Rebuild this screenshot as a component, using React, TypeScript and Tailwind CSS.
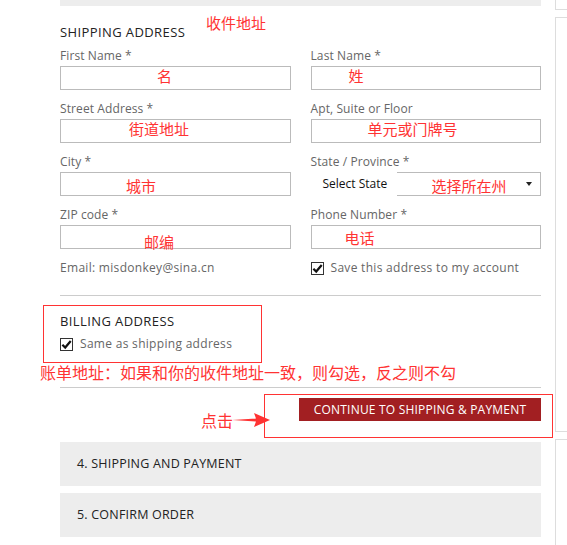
import React from "react";

const cjk = { fontFamily: '"Noto Sans CJK SC", sans-serif' };

function Check() {
  return (
    <span className="inline-flex h-[13px] w-[13px] shrink-0 items-center justify-center border border-[#333] bg-white">
      <svg width="11" height="11" viewBox="0 0 12 12">
        <path d="M1.5 6.2 L4.6 9.3 L10.6 2.2" fill="none" stroke="#111" strokeWidth="2.4" />
      </svg>
    </span>
  );
}

function Field({ label, note, noteLeft, noteTop = 0 }: { label: string; note?: string; noteLeft?: number; noteTop?: number }) {
  return (
    <div>
      <div className="mb-[2px] text-[12px] leading-[16px] tracking-[0.1px] text-[#666]">{label}</div>
      <div className="relative h-[24px] border border-[#bbb] bg-white">
        {note && (
          <span
            className="absolute whitespace-nowrap text-[15px] leading-[18px] text-[#f33]"
            style={{ ...cjk, left: noteLeft, top: noteTop }}
          >
            {note}
          </span>
        )}
      </div>
    </div>
  );
}

export default function App() {
  return (
    <div
      className="flex h-[545px] w-[567px] overflow-hidden bg-white"
      style={{ fontFamily: '"Open Sans", "Noto Sans CJK SC", sans-serif' }}
    >
      <div className="w-[60px] shrink-0" />

      <div className="w-[481px] shrink-0">
        <div className="h-[6px] bg-[#ededed]" />

        {/* shipping address */}
        <div className="relative mt-[18px] text-[13px] leading-[16px] tracking-[0.4px] text-[#222]">
          SHIPPING ADDRESS
          <span className="absolute left-[146px] top-[-10px] text-[15px] leading-[18px] tracking-normal text-[#f33]" style={cjk}>
            收件地址
          </span>
        </div>

        <div className="mt-[8px] grid grid-cols-2 gap-x-[20px] gap-y-[11px]">
          <Field label="First Name *" note="名" noteLeft={96} />
          <Field label="Last Name *" note="姓" noteLeft={37} />
          <Field label="Street Address *" note="街道地址" noteLeft={68} />
          <Field label="Apt, Suite or Floor" note="单元或门牌号" noteLeft={56} />
          <Field label="City *" note="城市" noteLeft={65} noteTop={4} />
          <div>
            <div className="mb-[2px] text-[12px] leading-[16px] tracking-[0.1px] text-[#666]">State / Province *</div>
            <div className="flex h-[24px] items-stretch">
              <div className="flex w-[86px] items-center pl-[12px] text-[12px] text-[#111]">Select State</div>
              <div className="relative flex flex-1 items-center justify-end border-y border-r border-[#bbb] pr-[8px]">
                <span className="absolute left-[35px] top-[4px] text-[15px] leading-[18px] text-[#f33]" style={cjk}>
                  选择所在州
                </span>
                <svg width="6" height="4" viewBox="0 0 6 4">
                  <path d="M0 0 H6 L3 4 Z" fill="#222" />
                </svg>
              </div>
            </div>
          </div>
          <Field label="ZIP code *" note="邮编" noteLeft={83} noteTop={7} />
          <Field label="Phone Number *" note="电话" noteLeft={33} noteTop={3} />
          <div className="text-[12px] leading-[16px] tracking-[0.3px] text-[#666]">Email: misdonkey@sina.cn</div>
          <label className="flex items-center gap-[7px] text-[12px] leading-[16px] tracking-[0.3px] text-[#666]">
            <Check />
            Save this address to my account
          </label>
        </div>

        <div className="mt-[19px] h-px bg-[#ccc]" />

        {/* billing address */}
        <div className="relative mt-[17px]">
          <div className="pointer-events-none absolute left-[-17px] top-[-8px] h-[58px] w-[219px] border border-[#f33]" />
          <div className="text-[13px] leading-[16px] tracking-[0.4px] text-[#222]">BILLING ADDRESS</div>
          <div className="mt-[7px] flex items-center gap-[7px] text-[12px] leading-[16px] tracking-[0.3px] text-[#666]">
            <Check />
            Same as shipping address
          </div>
        </div>

        <div className="ml-[-20px] mt-[10px] whitespace-nowrap text-[16px] leading-[20px] text-[#f33]" style={cjk}>
          账单地址：如果和你的收件地址一致，则勾选，反之则不勾
        </div>

        <div className="mt-[5px] h-px bg-[#ccc]" />

        <div className="relative mt-[10px] flex justify-end">
          <div className="pointer-events-none absolute left-[204px] top-[-4px] h-[44px] w-[289px] border border-[#f33]" />
          <span className="absolute left-[141px] top-[12px] text-[16px] leading-[20px] text-[#f33]" style={cjk}>
            点击
          </span>
          <svg className="absolute left-[172px] top-[14px]" width="40" height="16" viewBox="0 0 40 16">
            <path d="M0 8 L24 6.5 L22 1 L38 8 L22 15 L24 9.5 Z" fill="#f33" />
          </svg>
          <button className="h-[23px] w-[242px] bg-[#a21f22] text-[12px] tracking-[0.2px] text-white">
            CONTINUE TO SHIPPING &amp; PAYMENT
          </button>
        </div>

        <div className="mt-[21px] flex h-[44px] items-center bg-[#ededed] pl-[17px] text-[12.5px] tracking-[0.2px] text-[#222]">
          4. SHIPPING AND PAYMENT
        </div>
        <div className="mt-[7px] flex h-[44px] items-center bg-[#ededed] pl-[17px] text-[12.5px] tracking-[0.2px] text-[#222]">
          5. CONFIRM ORDER
        </div>
      </div>

      <div className="ml-[14px] flex flex-1 flex-col gap-[7px]">
        <div className="h-[10px] border-b border-l border-[#ddd]" />
        <div className="h-[415px] border-y border-l border-[#ddd]" />
        <div className="flex-1 border-t border-l border-[#ddd]" />
      </div>
    </div>
  );
}
